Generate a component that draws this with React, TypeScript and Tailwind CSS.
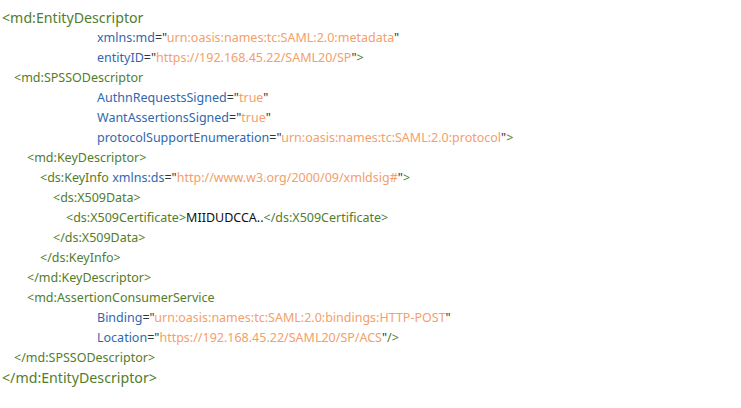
import React from "react";

type Seg = { t: string; c: "tag" | "attr" | "val" | "p" | "txt" };

const tag = (t: string): Seg => ({ t, c: "tag" });
const attr = (t: string): Seg => ({ t, c: "attr" });
const val = (t: string): Seg => ({ t, c: "val" });
const p = (t: string): Seg => ({ t, c: "p" });
const txt = (t: string): Seg => ({ t, c: "txt" });

const cls: Record<Seg["c"], string> = {
  tag: "text-[#527d2c]",
  attr: "text-[#3068b0]",
  val: "text-[#f3a06a]",
  p: "text-[#333333]",
  txt: "text-[#111111]",
};

const lines: { indent: string; segs: Seg[]; big?: boolean }[] = [
  { indent: "pl-[2px]", segs: [tag("<md:EntityDescriptor")], big: true },
  { indent: "pl-[97px]", segs: [attr("xmlns:md"), p("=\""), val("urn:oasis:names:tc:SAML:2.0:metadata"), p("\"")] },
  { indent: "pl-[97px]", segs: [attr("entityID"), p("=\""), val("https://192.168.45.22/SAML20/SP"), p("\""), tag(">")] },
  { indent: "pl-[14px]", segs: [tag("<md:SPSSODescriptor")] },
  { indent: "pl-[97px]", segs: [attr("AuthnRequestsSigned"), p("=\""), val("true"), p("\"")] },
  { indent: "pl-[97px]", segs: [attr("WantAssertionsSigned"), p("=\""), val("true"), p("\"")] },
  { indent: "pl-[97px]", segs: [attr("protocolSupportEnumeration"), p("=\""), val("urn:oasis:names:tc:SAML:2.0:protocol"), p("\""), tag(">")] },
  { indent: "pl-[27px]", segs: [tag("<md:KeyDescriptor>")] },
  { indent: "pl-[40px]", segs: [tag("<ds:KeyInfo "), attr("xmlns:ds"), p("=\""), val("http://www.w3.org/2000/09/xmldsig#"), p("\""), tag(">")] },
  { indent: "pl-[53px]", segs: [tag("<ds:X509Data>")] },
  { indent: "pl-[66px]", segs: [tag("<ds:X509Certificate>"), txt("MIIDUDCCA.."), tag("</ds:X509Certificate>")] },
  { indent: "pl-[53px]", segs: [tag("</ds:X509Data>")] },
  { indent: "pl-[40px]", segs: [tag("</ds:KeyInfo>")] },
  { indent: "pl-[27px]", segs: [tag("</md:KeyDescriptor>")] },
  { indent: "pl-[27px]", segs: [tag("<md:AssertionConsumerService")] },
  { indent: "pl-[97px]", segs: [attr("Binding"), p("=\""), val("urn:oasis:names:tc:SAML:2.0:bindings:HTTP-POST"), p("\"")] },
  { indent: "pl-[97px]", segs: [attr("Location"), p("=\""), val("https://192.168.45.22/SAML20/SP/ACS"), p("\""), tag("/>")] },
  { indent: "pl-[14px]", segs: [tag("</md:SPSSODescriptor>")] },
  { indent: "pl-[2px]", segs: [tag("</md:EntityDescriptor>")], big: true },
];

export default function App() {
  return (
    <div className="w-[741px] h-[408px] bg-white overflow-hidden pt-[8px] font-['Noto_Sans',sans-serif] text-[12.5px] leading-[20px]">
      {lines.map((l, i) => (
        <div key={i} className={`${l.indent} ${l.big ? "text-[14.2px]" : ""} whitespace-pre`}>
          {l.segs.map((s, j) => (
            <span key={j} className={cls[s.c]}>
              {s.t}
            </span>
          ))}
        </div>
      ))}
    </div>
  );
}
